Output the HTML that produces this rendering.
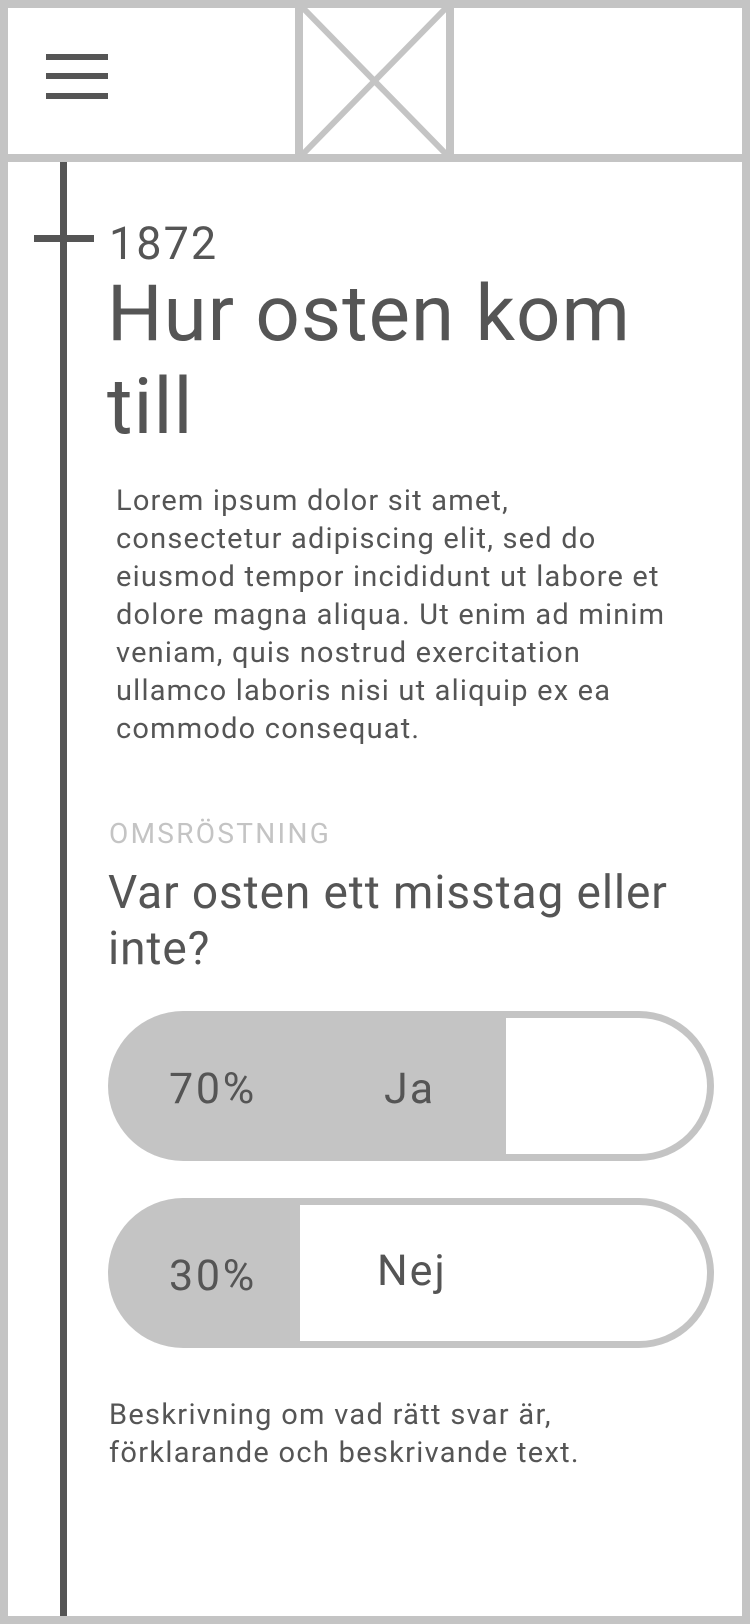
<!DOCTYPE html>
<html><head><meta charset="utf-8"><style>
*{margin:0;padding:0;box-sizing:border-box}
body{width:750px;height:1624px;position:relative;background:#fff;font-family:"Roboto","Liberation Sans",sans-serif;color:#555;overflow:hidden}
.a{position:absolute;white-space:nowrap}
.g{background:#c4c4c4;position:absolute}
.d{background:#555;position:absolute}
</style></head><body>
<div class="g" style="left:0;top:0;width:750px;height:8px"></div>
<div class="g" style="left:0;bottom:0;width:750px;height:8px"></div>
<div class="g" style="left:0;top:0;width:8px;height:1624px"></div>
<div class="g" style="right:0;top:0;width:8px;height:1624px"></div>
<div class="g" style="left:0;top:154px;width:750px;height:8px"></div>
<div class="g" style="left:295px;top:0;width:8px;height:160px"></div>
<div class="g" style="left:446px;top:0;width:8px;height:160px"></div>
<svg class="a" style="left:303px;top:8px" width="143" height="146"><line x1="0" y1="0" x2="143" y2="146" stroke="#c4c4c4" stroke-width="6"/><line x1="143" y1="0" x2="0" y2="146" stroke="#c4c4c4" stroke-width="6"/></svg>
<div class="d" style="left:46px;top:54px;width:62px;height:6px"></div>
<div class="d" style="left:46px;top:73px;width:62px;height:6px"></div>
<div class="d" style="left:46px;top:93px;width:62px;height:6px"></div>
<div class="d" style="left:60px;top:162px;width:7px;height:1454px"></div>
<div class="d" style="left:34px;top:235px;width:60px;height:7px"></div>

<div class="a" style="left:109px;top:221px;font-size:45px;line-height:1;letter-spacing:2px">1872</div>
<div class="a" style="left:107px;top:268px;font-size:78px;line-height:93px;letter-spacing:1px">Hur osten kom<br>till</div>
<div class="a" style="left:116px;top:482px;font-size:29px;line-height:38px;letter-spacing:1.2px">Lorem ipsum dolor sit amet,<br>consectetur adipiscing elit, sed do<br>eiusmod tempor incididunt ut labore et<br>dolore magna aliqua. Ut enim ad minim<br>veniam, quis nostrud exercitation<br>ullamco laboris nisi ut aliquip ex ea<br>commodo consequat.</div>
<div class="a" style="left:109px;top:820px;font-size:28px;line-height:1;color:#c4c4c4;letter-spacing:2.3px">OMSRÖSTNING</div>
<div class="a" style="left:108px;top:865px;font-size:46px;line-height:56px;letter-spacing:0.9px">Var osten ett misstag eller<br>inte?</div>

<div class="g" style="left:108px;top:1011px;width:606px;height:150px;border-radius:75px"></div>
<div class="a" style="left:506px;top:1018px;width:201px;height:136px;background:#fff;border-radius:0 68px 68px 0"></div>
<div class="a" style="left:169px;top:1068px;font-size:43px;line-height:1;letter-spacing:2.7px">70%</div>
<div class="a" style="left:384px;top:1068px;font-size:43px;line-height:1;letter-spacing:2px">Ja</div>
<div class="g" style="left:108px;top:1198px;width:606px;height:150px;border-radius:75px"></div>
<div class="a" style="left:300px;top:1205px;width:407px;height:136px;background:#fff;border-radius:0 68px 68px 0"></div>
<div class="a" style="left:169px;top:1255px;font-size:43px;line-height:1;letter-spacing:2.7px">30%</div>
<div class="a" style="left:377px;top:1250px;font-size:43px;line-height:1;letter-spacing:2px">Nej</div>

<div class="a" style="left:109px;top:1396px;font-size:29px;line-height:38px;letter-spacing:1.3px">Beskrivning om vad rätt svar är,<br>förklarande och beskrivande text.</div>
</body></html>
